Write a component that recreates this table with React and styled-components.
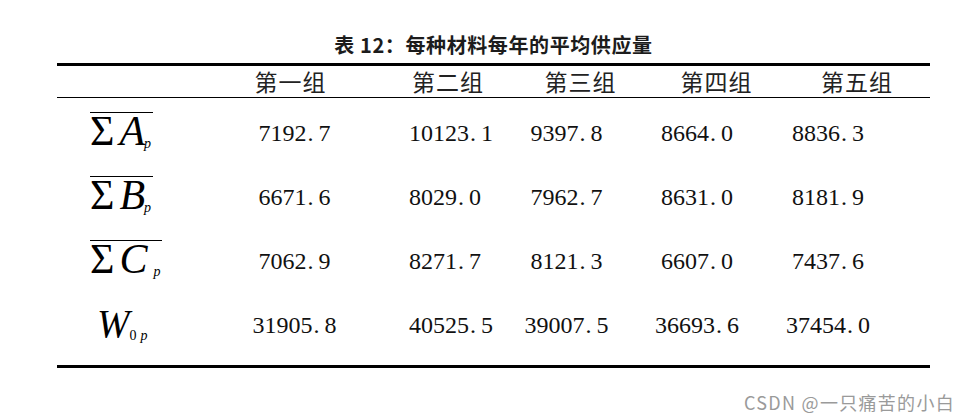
import React from "react";
import styled, { createGlobalStyle } from "styled-components";

const GlobalStyle = createGlobalStyle`
  html, body {
    margin: 0;
    padding: 0;
    background: #ffffff;
  }
`;

// ancho de columnas compartido por cabecera y filas
const COLUMNS = "160px 155px 152px 125px 135px 146px";

// cada columna de datos tiene su propio ajuste
const DATA_ALIGN = [
  { align: "center", pl: 0, pr: 0 },
  { align: "left", pl: 37, pr: 0 },
  { align: "center", pl: 0, pr: 40 },
  { align: "center", pl: 0, pr: 39 },
  { align: "center", pl: 0, pr: 58 },
];

const Page = styled.div`
  width: 970px;
  height: 417px;
  padding-left: 57px;
  box-sizing: border-box;
`;

const Caption = styled.div`
  width: 873px;
  height: 63px;
  box-sizing: border-box;
  padding-top: 32px;
  text-align: center;
  font-family: "Noto Sans CJK SC", "Noto Sans", sans-serif;
  font-weight: 700;
  font-size: 20px;
  line-height: 26px;
  letter-spacing: 0.6px;
  color: #1c1c1c;
`;

const Table = styled.div`
  width: 873px;
  border-top: 3px solid #000;
  border-bottom: 3px solid #000;
`;

const HeadRow = styled.div`
  display: grid;
  grid-template-columns: ${COLUMNS};
  height: 31px;
  align-items: center;
  border-bottom: 1px solid #000;
`;

const HeadCell = styled.div`
  text-align: center;
  padding-right: ${(p) => p.$pr || 0}px;
  font-family: "Noto Sans CJK SC", sans-serif;
  font-size: 23px;
  line-height: 31px;
  color: #222;
  letter-spacing: 1px;
`;

const Body = styled.div`
  padding: 3px 0 8px;
`;

const Row = styled.div`
  display: grid;
  grid-template-columns: ${COLUMNS};
  height: 64px;
  align-items: center;
`;

const LabelCell = styled.div`
  padding-left: ${(p) => p.$pl}px;
  margin-top: 3px;
  font-family: "Liberation Serif", "Times New Roman", serif;
  color: #000;
`;

const DataCell = styled.div`
  text-align: ${(p) => p.$align};
  padding-left: ${(p) => p.$pl}px;
  padding-right: ${(p) => p.$pr}px;
  font-family: "Liberation Serif", "Times New Roman", serif;
  font-size: 24px;
  line-height: 28px;
  color: #111;
`;

const Dot = styled.span`
  display: inline-block;
  width: 12px;
  text-align: left;
  padding-left: 1px;
  box-sizing: border-box;
`;

const Expr = styled.span`
  display: inline-block;
  white-space: nowrap;
  line-height: 27px;
  padding-top: 5px;
  padding-right: 2px;
  border-top: ${(p) => (p.$over ? "1.5px solid #000" : "1.5px solid transparent")};
`;

const Sigma = styled.span`
  font-size: 42px;
  font-style: normal;
  margin-right: 5px;
`;

const Var = styled.span`
  font-size: ${(p) => p.$size || 42}px;
  font-style: italic;
`;

const Sub = styled.span`
  font-size: 14px;
  font-style: ${(p) => (p.$upright ? "normal" : "italic")};
  vertical-align: -3px;
  margin-left: ${(p) => p.$gap || 0}px;
`;

const Watermark = styled.div`
  width: 898px;
  margin-top: 22px;
  text-align: right;
  font-family: "Noto Sans CJK SC", "Noto Sans", sans-serif;
  font-size: 18px;
  line-height: 24px;
  letter-spacing: 1.3px;
  color: #9a9a9a;
`;

const headers = [
  { text: "第一组", pr: 8 },
  { text: "第二组", pr: 0 },
  { text: "第三组", pr: 12 },
  { text: "第四组", pr: 0 },
  { text: "第五组", pr: 0 },
];

const rows = [
  { key: "A", values: ["7192.7", "10123.1", "9397.8", "8664.0", "8836.3"] },
  { key: "B", values: ["6671.6", "8029.0", "7962.7", "8631.0", "8181.9"] },
  { key: "C", values: ["7062.9", "8271.7", "8121.3", "6607.0", "7437.6"] },
  { key: "W", values: ["31905.8", "40525.5", "39007.5", "36693.6", "37454.0"] },
];

const Num = ({ value }) => {
  const [whole, dec] = value.split(".");
  return (
    <>
      {whole}
      <Dot>.</Dot>
      {dec}
    </>
  );
};

const Label = ({ name }) => {
  if (name === "W") {
    return (
      <Expr>
        <Var $size={39}>W</Var>
        <Sub $upright $gap={0}>0</Sub>
        <Sub $gap={4}>p</Sub>
      </Expr>
    );
  }
  return (
    <Expr $over>
      <Sigma>Σ</Sigma>
      <Var>{name}</Var>
      <Sub $gap={name === "C" ? 6 : -1}>p</Sub>
    </Expr>
  );
};

const App = () => {
  return (
    <Page>
      <GlobalStyle />
      <Caption>表 12：每种材料每年的平均供应量</Caption>
      <Table>
        <HeadRow>
          <div />
          {headers.map((h) => (
            <HeadCell key={h.text} $pr={h.pr}>
              {h.text}
            </HeadCell>
          ))}
        </HeadRow>
        <Body>
          {rows.map((row) => (
            <Row key={row.key}>
              <LabelCell $pl={row.key === "W" ? 40 : 33}>
                <Label name={row.key} />
              </LabelCell>
              {row.values.map((v, i) => (
                <DataCell
                  key={i}
                  $align={DATA_ALIGN[i].align}
                  $pl={DATA_ALIGN[i].pl}
                  $pr={DATA_ALIGN[i].pr}
                >
                  <Num value={v} />
                </DataCell>
              ))}
            </Row>
          ))}
        </Body>
      </Table>
      <Watermark>CSDN @一只痛苦的小白</Watermark>
    </Page>
  );
};

export default App;
